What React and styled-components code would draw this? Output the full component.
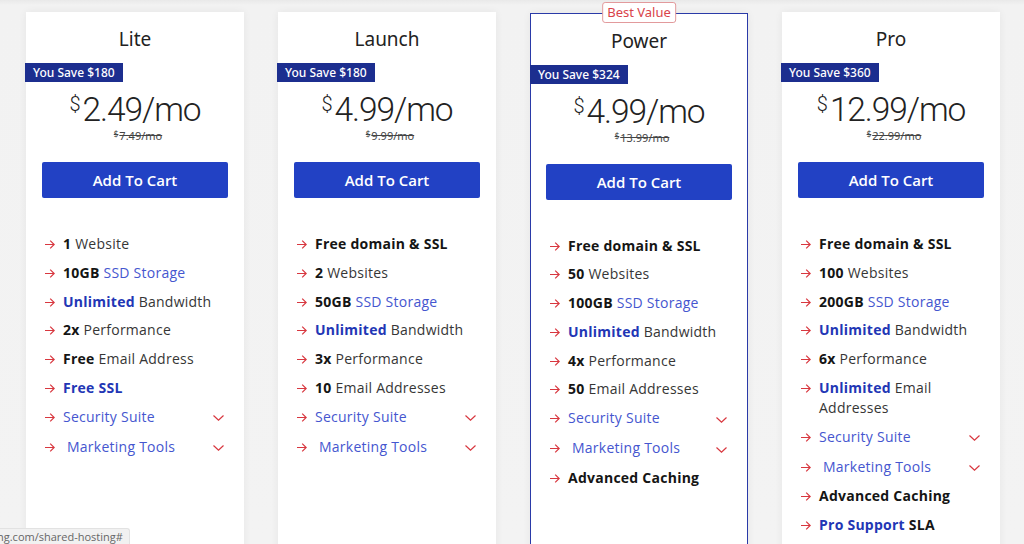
import React from "react";
import styled, { createGlobalStyle } from "styled-components";

const Global = createGlobalStyle`
  html, body { margin: 0; padding: 0; }
  *, *::before, *::after { box-sizing: border-box; }
  body {
    background: #f2f2f2;
    overflow: hidden;
    font-family: "Open Sans", "Noto Sans", sans-serif;
    color: #333;
  }
  #root { min-height: 544px; }
`;

const Page = styled.div`
  position: relative;
  height: 544px;
  overflow: hidden;
  background: linear-gradient(#e9e9e9 0px, #f2f2f2 5px, #f3f3f3 100%);
`;

const Row = styled.div`
  display: flex;
  gap: 34px;
  padding: 12px 24px 0 26px;
  align-items: flex-start;
`;

const Card = styled.div`
  position: relative;
  width: 218px;
  flex: 0 0 218px;
  min-height: 560px;
  background: #fff;
  box-shadow: 0 0 8px rgba(0, 0, 0, 0.06);
  border: ${(p) => (p.$featured ? "1.5px solid #2a3aa8" : "0")};
  margin-top: ${(p) => (p.$featured ? "1px" : "0")};
  padding-top: ${(p) => (p.$featured ? "13.5px" : "14px")};
`;

const Badge = styled.div`
  position: absolute;
  top: -12px;
  left: 50%;
  transform: translateX(-50%);
  background: #fff;
  border: 1px solid #e29a9c;
  border-radius: 3px;
  color: #d9434a;
  font-size: 13px;
  line-height: 19px;
  padding: 0 4px;
  white-space: nowrap;
  font-family: "Noto Sans", sans-serif;
`;

const Title = styled.div`
  text-align: center;
  font-family: "Noto Sans", sans-serif;
  font-size: 19px;
  line-height: 26px;
  color: #222;
`;

const Ribbon = styled.div`
  display: block;
  width: max-content;
  height: 19px;
  margin-top: 11px;
  margin-left: -1px;
  background: #1c2e8f;
  color: #fff;
  font-family: "Noto Sans", sans-serif;
  font-size: 12px;
  font-weight: 500;
  line-height: 19px;
  padding: 0 8px;
`;

const PriceBlock = styled.div`
  display: flex;
  flex-direction: column;
  align-items: center;
  margin-top: 11px;
`;

const Price = styled.div`
  display: flex;
  align-items: flex-start;
  font-family: Roboto, "Noto Sans", sans-serif;
  font-weight: 300;
  color: #222;
  line-height: 34px;
  height: 34px;
`;

const Cur = styled.span`
  font-size: 20px;
  line-height: 20px;
  margin-top: 1px;
  margin-right: 2px;
`;

const Amount = styled.span`
  font-size: 33.5px;
  letter-spacing: -1.1px;
`;

const OldPrice = styled.div`
  margin-top: 3px;
  margin-left: 6px;
  font-family: "Noto Sans", sans-serif;
  font-size: 11px;
  line-height: 12px;
  color: #444;
  text-decoration: line-through;
  display: flex;
  align-items: flex-start;
  sup {
    font-size: 8px;
    line-height: 8px;
    margin-right: 1px;
  }
`;

const CartButton = styled.button`
  display: block;
  width: 186px;
  height: 36px;
  margin: 20px auto 0;
  border: 0;
  border-radius: 2px;
  background: #2241c4;
  color: #fff;
  font-family: "Open Sans", sans-serif;
  font-size: 15px;
  font-weight: 600;
  letter-spacing: 0;
  cursor: pointer;
`;

const Features = styled.ul`
  list-style: none;
  margin: 36px 0 0;
  padding: 0 20px 0 19px;
  display: flex;
  flex-direction: column;
  gap: 8.8px;
`;

const Feature = styled.li`
  display: flex;
  align-items: flex-start;
  min-height: ${(p) => (p.$expand ? "21px" : "20px")};
  font-size: 14px;
  letter-spacing: 0.25px;
  line-height: 20px;
  color: #363636;
`;

const ArrowBox = styled.span`
  flex: 0 0 10px;
  width: 10px;
  height: 20px;
  margin-right: 8px;
  display: flex;
  align-items: center;
  padding-top: 1px;
`;

const Text = styled.span`
  flex: 1;
  padding-left: ${(p) => (p.$indent ? "4px" : "0")};
`;

const B = styled.b`
  font-weight: 700;
  color: ${(p) => (p.$blue ? "#2236b5" : "#151515")};
`;

const Link = styled.span`
  color: #4556cf;
`;

const Chevron = styled.span`
  flex: 0 0 10px;
  display: flex;
  align-items: center;
  height: 20px;
  padding-top: 3px;
  margin-left: 8px;
`;

const StatusBar = styled.div`
  position: absolute;
  left: 0;
  bottom: 0;
  height: 16px;
  padding: 0 6px 0 0;
  background: #f1f1f1;
  border-top: 1px solid #e2e2e2;
  border-right: 1px solid #e2e2e2;
  border-top-right-radius: 3px;
  font-family: "Open Sans", sans-serif;
  font-size: 11px;
  line-height: 15px;
  color: #666;
  white-space: nowrap;
  margin-left: -3px;
`;

const Arrow = () => (
  <svg width="10" height="9" viewBox="0 0 10 9" fill="none" stroke="#d8373f" strokeWidth="1.2">
    <path d="M0 4.5H9.2M5.2 0.6L9.2 4.5L5.2 8.4" />
  </svg>
);

const Down = () => (
  <svg width="11" height="6" viewBox="0 0 11 6" fill="none" stroke="#d8373f" strokeWidth="1.2">
    <path d="M0.5 0.5L5.5 5.2L10.5 0.5" />
  </svg>
);

const plans = [
  {
    name: "Lite",
    save: "$180",
    price: "2.49",
    old: "7.49",
    features: [
      [["b", "1"], ["t", " Website"]],
      [["b", "10GB"], ["t", " "], ["l", "SSD Storage"]],
      [["bb", "Unlimited"], ["t", " Bandwidth"]],
      [["b", "2x"], ["t", " Performance"]],
      [["b", "Free"], ["t", " Email Address"]],
      [["bb", "Free SSL"]],
      "sec",
      "mkt",
    ],
  },
  {
    name: "Launch",
    save: "$180",
    price: "4.99",
    old: "9.99",
    features: [
      [["b", "Free domain & SSL"]],
      [["b", "2"], ["t", " Websites"]],
      [["b", "50GB"], ["t", " "], ["l", "SSD Storage"]],
      [["bb", "Unlimited"], ["t", " Bandwidth"]],
      [["b", "3x"], ["t", " Performance"]],
      [["b", "10"], ["t", " Email Addresses"]],
      "sec",
      "mkt",
    ],
  },
  {
    name: "Power",
    featured: true,
    save: "$324",
    price: "4.99",
    old: "13.99",
    features: [
      [["b", "Free domain & SSL"]],
      [["b", "50"], ["t", " Websites"]],
      [["b", "100GB"], ["t", " "], ["l", "SSD Storage"]],
      [["bb", "Unlimited"], ["t", " Bandwidth"]],
      [["b", "4x"], ["t", " Performance"]],
      [["b", "50"], ["t", " Email Addresses"]],
      "sec",
      "mkt",
      [["b", "Advanced Caching"]],
    ],
  },
  {
    name: "Pro",
    save: "$360",
    price: "12.99",
    old: "22.99",
    features: [
      [["b", "Free domain & SSL"]],
      [["b", "100"], ["t", " Websites"]],
      [["b", "200GB"], ["t", " "], ["l", "SSD Storage"]],
      [["bb", "Unlimited"], ["t", " Bandwidth"]],
      [["b", "6x"], ["t", " Performance"]],
      [["bb", "Unlimited"], ["t", " Email Addresses"]],
      "sec",
      "mkt",
      [["b", "Advanced Caching"]],
      [["bb", "Pro Support"], ["t", " "], ["b", "SLA"]],
    ],
  },
];

const renderPart = ([kind, txt], i) => {
  if (kind === "b") return <B key={i}>{txt}</B>;
  if (kind === "bb") return <B key={i} $blue>{txt}</B>;
  if (kind === "l") return <Link key={i}>{txt}</Link>;
  return <React.Fragment key={i}>{txt}</React.Fragment>;
};

const FeatureItem = ({ f }) => {
  if (f === "sec" || f === "mkt") {
    return (
      <Feature $expand>
        <ArrowBox><Arrow /></ArrowBox>
        <Text $indent={f === "mkt"}>
          <Link>{f === "sec" ? "Security Suite" : "Marketing Tools"}</Link>
        </Text>
        <Chevron><Down /></Chevron>
      </Feature>
    );
  }
  return (
    <Feature>
      <ArrowBox><Arrow /></ArrowBox>
      <Text>{f.map(renderPart)}</Text>
    </Feature>
  );
};

export default function App() {
  return (
    <Page>
      <Global />
      <Row>
        {plans.map((p) => (
          <Card key={p.name} $featured={p.featured}>
            {p.featured && <Badge>Best Value</Badge>}
            <Title>{p.name}</Title>
            <Ribbon>You Save {p.save}</Ribbon>
            <PriceBlock>
              <Price>
                <Cur>$</Cur>
                <Amount>{p.price}/mo</Amount>
              </Price>
              <OldPrice>
                <sup>$</sup>
                {p.old}/mo
              </OldPrice>
            </PriceBlock>
            <CartButton>Add To Cart</CartButton>
            <Features>
              {p.features.map((f, i) => (
                <FeatureItem key={i} f={f} />
              ))}
            </Features>
          </Card>
        ))}
      </Row>
      <StatusBar>ng.com/shared-hosting#</StatusBar>
    </Page>
  );
}
